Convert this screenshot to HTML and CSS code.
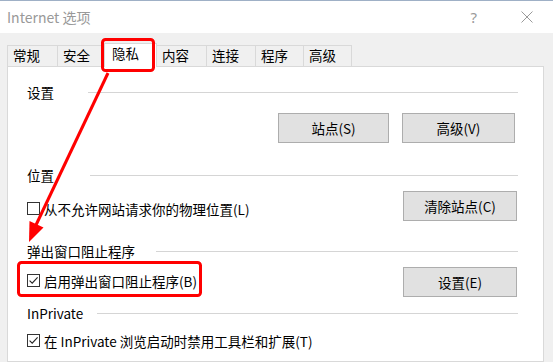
FILE: index.html
```html
<!DOCTYPE html>
<html lang="zh-CN">
<head>
<meta charset="utf-8">
<title>Internet 选项</title>
<link rel="stylesheet" href="styles.css">
</head>
<body>
<div class="window">
  <header class="titlebar">
    <span class="title">Internet 选项</span>
    <span class="help">?</span>
    <svg class="close" width="12" height="12" viewBox="0 0 12 12"><path d="M0.5 0.5 L11.5 11.5 M11.5 0.5 L0.5 11.5" stroke="#9a9a9a" stroke-width="1" fill="none"/></svg>
  </header>
  <div class="body">
    <nav class="tabs">
      <div class="tab tab-first">常规</div>
      <div class="tab">安全</div>
      <div class="tab tab-active">隐私</div>
      <div class="tab">内容</div>
      <div class="tab">连接</div>
      <div class="tab tab-narrow">程序</div>
      <div class="tab tab-last">高级</div>
    </nav>
    <section class="panel">
      <div class="ghead">
        <span class="glabel w-set">设置</span><i class="rule"></i>
      </div>
      <div class="btn-row">
        <div class="btn btn-sites">站点(S)</div>
        <div class="btn btn-adv">高级(V)</div>
      </div>

      <div class="ghead gap-loc">
        <span class="glabel w-loc">位置</span><i class="rule"></i>
      </div>
      <div class="opt-row">
        <label class="check check-loc"><span class="box"></span><span>从不允许网站请求你的物理位置(L)</span></label>
        <div class="btn btn-wide">清除站点(C)</div>
      </div>

      <div class="ghead gap-pop">
        <span class="glabel w-pop">弹出窗口阻止程序</span><i class="rule"></i>
      </div>
      <div class="opt-row">
        <label class="check check-pop"><span class="box"><svg width="11" height="11" viewBox="0 0 11 11"><path d="M1.6 5.6 L4.2 8.2 L9.6 2.4" stroke="#222" stroke-width="1.1" fill="none"/></svg></span><span>启用弹出窗口阻止程序(B)</span></label>
        <div class="btn btn-wide">设置(E)</div>
      </div>

      <div class="ghead gap-inp">
        <span class="glabel w-inp">InPrivate</span><i class="rule"></i>
      </div>
      <div class="opt-row row-last">
        <label class="check"><span class="box"><svg width="11" height="11" viewBox="0 0 11 11"><path d="M1.6 5.6 L4.2 8.2 L9.6 2.4" stroke="#222" stroke-width="1.1" fill="none"/></svg></span><span>在 InPrivate 浏览启动时禁用工具栏和扩展(T)</span></label>
      </div>
    </section>
  </div>
  <svg class="annot" width="553" height="362" viewBox="0 0 553 362">
    <rect x="102.5" y="39.5" width="51" height="31" rx="3" ry="3" fill="none" stroke="#ff0000" stroke-width="3"/>
    <rect x="18.5" y="262.5" width="182" height="33" rx="3" ry="3" fill="none" stroke="#ff0000" stroke-width="3"/>
    <line x1="108" y1="73" x2="36" y2="225" stroke="#ff0000" stroke-width="3"/>
    <polygon points="29,242 29.5,221 43.5,227.5" fill="#ff0000"/>
  </svg>
</div>
</body>
</html>
```

FILE: styles.css
```css
* { box-sizing: border-box; margin: 0; padding: 0; }
html, body { width: 553px; height: 362px; overflow: hidden; }
body {
  font-family: "Noto Sans CJK SC", "Noto Sans", sans-serif;
  font-size: 13.5px;
  color: #000;
  background: #f0f0f0;
}
.window { position: relative; width: 553px; height: 362px; display: flex; flex-direction: column; }

.titlebar {
  height: 33px;
  flex: none;
  background: #fff;
  border-top: 1px solid #9fb0c6;
  display: flex;
  align-items: center;
  padding-left: 7px;
}
.title { font-size: 14px; color: #999; }
.help { margin-left: auto; font-family: "Noto Sans", sans-serif; font-size: 15px; color: #9a9a9a; }
.close { margin-left: 44px; margin-right: 20px; }

.body { flex: 1; display: flex; flex-direction: column; padding-top: 12px; padding-left: 7px; }

.tabs { display: flex; height: 21px; position: relative; z-index: 1; flex: none; }
.tab {
  width: 49px;
  height: 21px;
  border: 1px solid #d9d9d9;
  border-right: none;
  border-bottom: none;
  padding-left: 5px;
  line-height: 19px;
  background: #f0f0f0;
}
.tab-first { width: 50px; padding-left: 5px; }
.tab-narrow { width: 48px; }
.tab-last { border-right: 1px solid #d9d9d9; }
.tab-active {
  width: 53px;
  height: 24px;
  margin-top: -2px;
  margin-left: -2px;
  background: #fff;
  border-right: 1px solid #d9d9d9;
  padding-left: 7px;
  line-height: 19px;
}
.tab-active + .tab { border-left: none; }

.panel {
  width: 537px;
  flex: 1;
  background: #fff;
  border: 1px solid #d9d9d9;
  padding: 15px 25px 0 19px;
}

.ghead { display: flex; align-items: center; height: 20px; }
.glabel { flex: none; }
.w-set { width: 61px; }
.w-loc { width: 63px; }
.w-pop { width: 129px; }
.w-inp { width: 70px; }
.rule { flex: 1; height: 1px; background: #d5d5d5; }
.gap-loc { margin-top: 22px; }
.gap-pop { margin-top: 20px; }
.gap-inp { margin-top: 6px; }

.btn-row { margin-top: 11px; display: flex; justify-content: flex-end; gap: 13px; padding-right: 3px; }
.btn {
  height: 30px;
  background: #e1e1e1;
  border: 1px solid #adadad;
  display: flex;
  align-items: center;
  justify-content: center;
  flex: none;
}
.btn-sites { width: 111px; }
.btn-adv { width: 113px; }
.btn-wide { width: 114px; margin-left: auto; margin-right: 1px; }

.opt-row { margin-top: 6px; display: flex; align-items: flex-start; }
.row-last { margin-top: 11px; }
.check { display: flex; align-items: center; height: 13px; gap: 4px; }
.check-loc { margin-top: 11px; }
.check-pop { margin-top: 7px; }
.box {
  width: 13px;
  height: 13px;
  border: 1px solid #333;
  background: #fff;
  flex: none;
  display: flex;
  align-items: center;
  justify-content: center;
}
.box svg { display: block; }

.annot { position: absolute; left: 0; top: 0; z-index: 10; pointer-events: none; }
```
